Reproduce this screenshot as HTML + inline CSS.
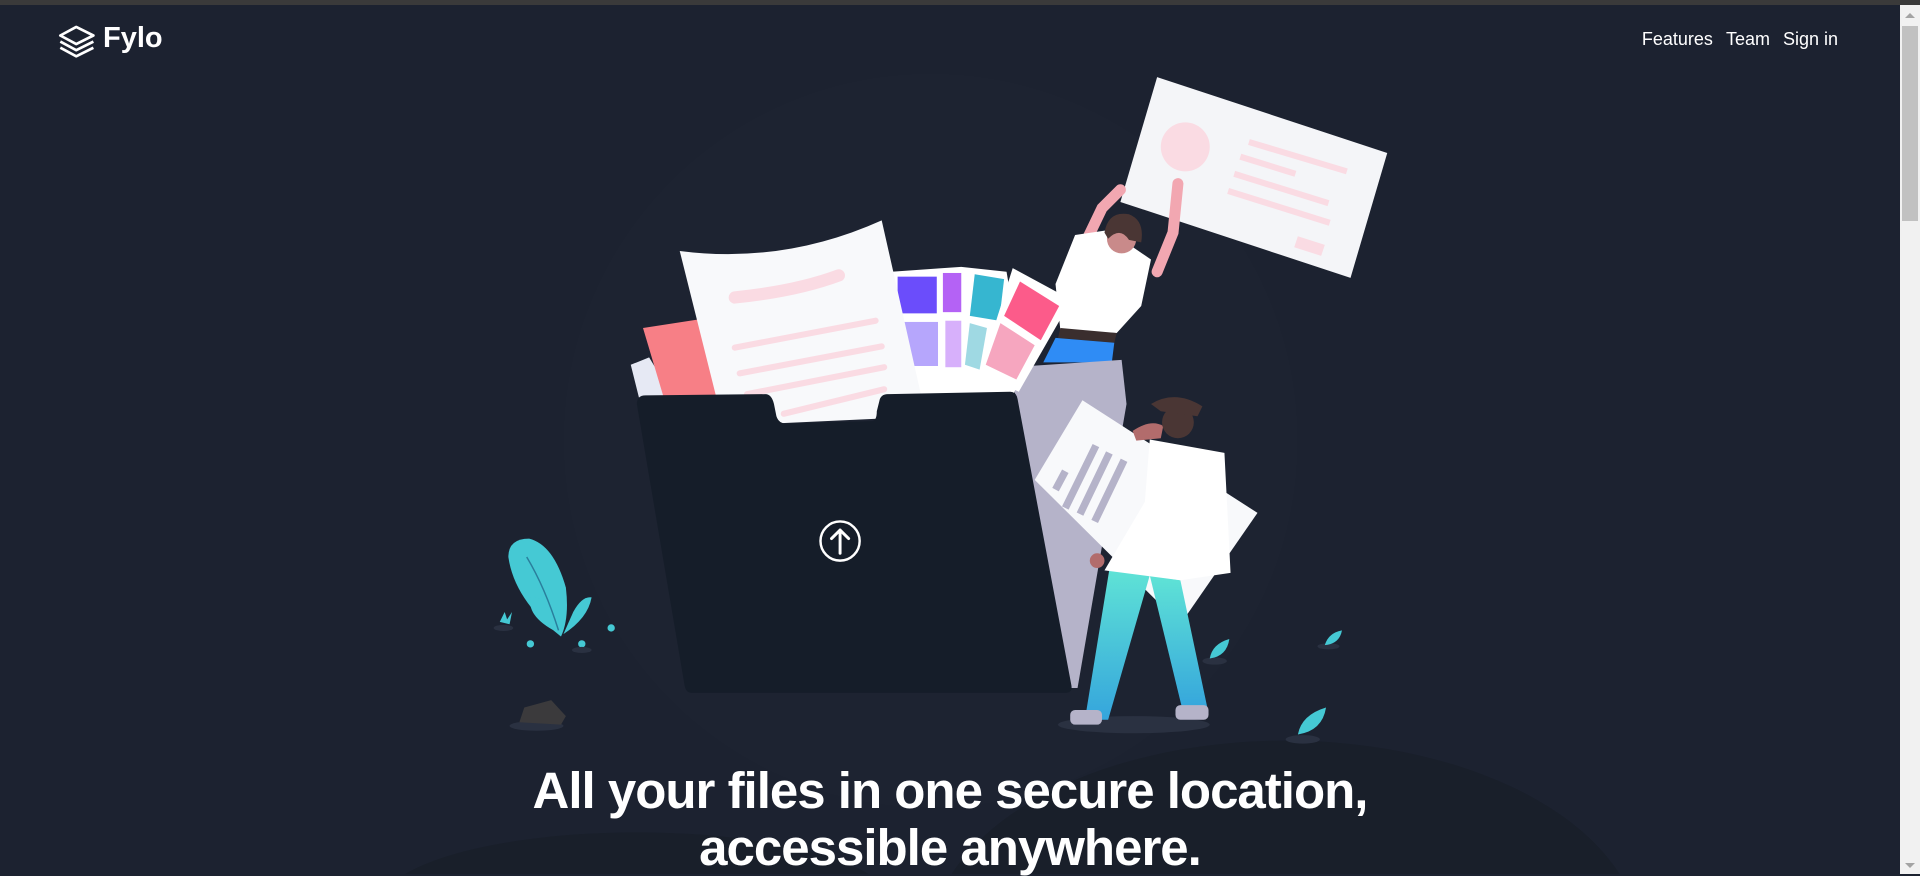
<!DOCTYPE html>
<html><head><meta charset="utf-8"><style>
html,body{margin:0;padding:0;width:1920px;height:874px;overflow:hidden;background:#1c2230;font-family:"Liberation Sans",sans-serif;}
.topbar{position:absolute;left:0;top:0;width:1920px;height:5px;background:#3a3a3a;}
.sb{position:absolute;right:0;top:5px;width:20px;height:869px;background:#f1f1f1;}
.sb .th{position:absolute;left:2px;top:21px;width:16px;height:195px;background:#c1c1c1;}
.sb .up{position:absolute;left:5px;top:8px;width:0;height:0;border-left:5px solid transparent;border-right:5px solid transparent;border-bottom:5px solid #a3a3a3;}
.sb .dn{position:absolute;left:5px;bottom:6px;width:0;height:0;border-left:5px solid transparent;border-right:5px solid transparent;border-top:5px solid #a3a3a3;}
svg.ill{position:absolute;left:0;top:0;}
.logo{position:absolute;left:103px;top:22px;color:#fff;font-weight:bold;font-size:29px;}
.nav{position:absolute;right:82px;top:29px;color:#fff;font-size:18px;}
.nav span{margin-left:13px;}
h1{position:absolute;left:0;width:1900px;top:762px;margin:0;text-align:center;color:#fff;font-weight:bold;font-size:51px;line-height:57px;letter-spacing:-1px;white-space:nowrap;}
</style></head><body>
<div class="topbar"></div>
<svg class="ill" width="1900" height="874" viewBox="0 0 1551.6 714" xmlns="http://www.w3.org/2000/svg">
<defs>
<linearGradient id="teal" x1="0" y1="0" x2="0" y2="1"><stop offset="0" stop-color="#5fe3d6"/><stop offset="1" stop-color="#35a5dc"/></linearGradient>
</defs>
<circle cx="760" cy="360" r="300" fill="#1d2331"/>
<ellipse cx="1050" cy="770" rx="290" ry="165" fill="#191f2a"/>
<ellipse cx="520" cy="740" rx="210" ry="60" fill="#191f2a"/>
<g fill="none" stroke="#fff" stroke-width="2.2" stroke-linejoin="round">
<path d="M49,29 L62,22 L76,29 L62,36 Z"/>
<path d="M49,34 L62,41 L76,34"/>
<path d="M49,39 L62,46 L76,39"/>
</g>
<polygon points="945,63 1133,125 1103,227 915,165" fill="#f4f5f8"/>
<circle cx="968" cy="120" r="20" fill="#fadbe3"/>
<g stroke="#fadbe3" stroke-width="5"><line x1="1020" y1="116" x2="1100" y2="140"/><line x1="1013" y1="128" x2="1058" y2="142"/><line x1="1008" y1="142" x2="1085" y2="166"/><line x1="1003" y1="156" x2="1086" y2="182"/></g>
<polygon points="1060,193 1082,200 1079,209 1057,202" fill="#fadbe3"/>
<g stroke="#f2a7b1" stroke-width="9" stroke-linecap="round" fill="none"><path d="M888,195 L900,170 L915,155"/><path d="M945,222 L958,190 L962,150"/></g>
<polygon points="878,192 905,188 940,212 932,250 912,272 866,270 862,232" fill="#ffffff"/>
<circle cx="916" cy="195" r="12" fill="#c98a8a"/>
<path d="M902,190 Q905,172 922,175 Q935,180 932,198 L922,196 Q915,185 905,195 Z" fill="#4a3634"/>
<polygon points="866,268 912,272 910,280 864,276" fill="#3a2e2e"/>
<polygon points="862,276 910,280 908,296 852,296" fill="#2f8cf5"/>
<polygon points="826,300 916,294 920,330 880,562 862,562" fill="#b5b3c9"/>
<polygon points="515,298 530,292 550,325 522,326" fill="#e6e9f4"/>
<polygon points="525,268 570,261 588,323 542,325" fill="#f77f86"/>
<polygon points="728,222 770,219 785,218 822,222 835,300 828,322 738,324" fill="#ffffff"/>
<rect x="733" y="226" width="32" height="30" fill="#6b4dfb"/>
<rect x="770" y="223" width="15" height="32" fill="#b462f5"/>
<polygon points="796,224 820,228 816,262 792,258" fill="#36b6d0"/>
<rect x="738" y="263" width="28" height="36" fill="#b6a6fc"/>
<rect x="772" y="262" width="13" height="38" fill="#d7b0fb"/>
<polygon points="792,264 806,268 800,302 788,298" fill="#9fd9e3"/>
<polygon points="827,219 875,245 832,320 800,305" fill="#ffffff"/>
<polygon points="833,230 865,250 850,278 820,258" fill="#fc5b8a"/>
<polygon points="817,264 845,282 830,310 805,298" fill="#f6a6bf"/>
<path d="M555,205 Q640,216 720,180 L752,322 L720,325 L718,342 L632,346 L628,325 L585,325 Z" fill="#f8f9fb"/>
<g stroke="#fadbe3" stroke-linecap="round" fill="none"><path d="M600,243 Q650,238 685,225" stroke-width="10"/><path d="M600,284 L715,262" stroke-width="5"/><path d="M604,305 L720,283" stroke-width="5"/><path d="M610,322 L722,300" stroke-width="5"/><path d="M640,338 L722,318" stroke-width="5"/></g>
<path d="M520,330 Q520,323 527,323 L625,322 Q630,322 632,330 L634,340 Q636,346 642,346 L712,344 Q716,344 716,336 L718,328 Q719,322 725,322 L825,320 Q830,320 831,326 L875,560 Q876,566 870,566 L565,566 Q560,566 559,560 Z" fill="#151d29"/>
<circle cx="686" cy="442" r="16" fill="none" stroke="#fff" stroke-width="2"/>
<path d="M686,452 L686,433 M679,440 L686,433 L693,440" fill="none" stroke="#fff" stroke-width="2.4" stroke-linecap="round" stroke-linejoin="round"/>
<ellipse cx="926" cy="592" rx="62" ry="7" fill="#2a3141"/>
<polygon points="884,327 1027,419 964,510 845,392" fill="#f8f9fb"/>
<g stroke="#b5b3c9" stroke-width="6"><line x1="862" y1="400" x2="870" y2="385"/><line x1="870" y1="415" x2="895" y2="364"/><line x1="882" y1="420" x2="906" y2="370"/><line x1="894" y1="426" x2="918" y2="376"/></g>
<path d="M906,465 L939,470 L905,588 L886,588 Z" fill="url(#teal)"/>
<path d="M939,470 L964,474 L986,578 L966,581 Z" fill="url(#teal)"/>
<polygon points="939,359 1000,370 1005,468 964,474 902,466 935,410" fill="#ffffff"/>
<circle cx="896" cy="458" r="6" fill="#b26c6c"/>
<path d="M925,352 Q940,342 950,348 L948,358 L928,360 Z" fill="#b26c6c"/>
<circle cx="962" cy="345" r="13" fill="#4a3634"/>
<path d="M940,330 Q960,318 982,332 L978,340 L948,336 Z" fill="#4a3634"/>
<rect x="874" y="580" width="26" height="12" rx="4" fill="#b5b3c9"/>
<rect x="960" y="576" width="27" height="12" rx="4" fill="#b5b3c9"/>
<path d="M458,520 Q420,490 415,455 Q415,440 432,440 Q452,445 462,480 Q465,505 458,520 Z" fill="#45c9d4"/>
<path d="M458,518 Q430,505 433,488 Q440,485 450,500 Z" fill="#45c9d4"/>
<path d="M460,518 Q480,505 483,488 Q475,487 468,500 Z" fill="#45c9d4"/>
<path d="M456,515 Q445,480 430,455" stroke="#2a7f9c" stroke-width="1.2" fill="none"/>
<g fill="#45c9d4"><path d="M408,508 L412,500 L414,506 L418,500 L416,510 Z"/><circle cx="433" cy="526" r="3"/><circle cx="475" cy="526" r="3"/><circle cx="499" cy="513" r="3"/></g>
<ellipse cx="411" cy="513" rx="8" ry="2.5" fill="#2a3141"/>
<ellipse cx="475" cy="531" rx="8" ry="2.5" fill="#2a3141"/>
<ellipse cx="438" cy="593" rx="22" ry="4" fill="#2a3141"/>
<path d="M424,590 L428,578 L450,572 L462,585 L458,592 Z" fill="#3b3a3c"/>
<ellipse cx="992" cy="540" rx="10" ry="3" fill="#2a3141"/>
<path d="M988,538 Q990,526 1004,522 Q1002,536 988,538 Z" fill="#45c9d4"/>
<ellipse cx="1085" cy="528" rx="9" ry="2.5" fill="#2a3141"/>
<path d="M1082,527 Q1085,517 1096,515 Q1094,526 1082,527 Z" fill="#45c9d4"/>
<ellipse cx="1064" cy="604" rx="14" ry="3.5" fill="#2a3141"/>
<path d="M1060,600 Q1063,584 1083,578 Q1080,597 1060,600 Z" fill="#45c9d4"/>
</svg>
<div class="logo">Fylo</div>
<div class="nav"><span>Features</span><span>Team</span><span>Sign in</span></div>
<h1>All your files in one secure location,<br>accessible anywhere.</h1>
<div class="sb"><div class="up"></div><div class="th"></div><div class="dn"></div></div>
</body></html>
